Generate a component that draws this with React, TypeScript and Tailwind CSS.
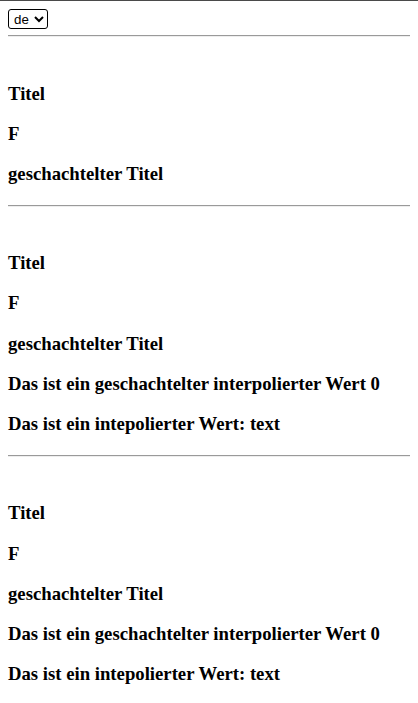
import React from "react";

const serif = "font-['Liberation_Serif','Times_New_Roman',serif]";

function Heading({ children }: { children: React.ReactNode }) {
  return <h3 className={`${serif} text-[18.72px] font-bold leading-[21.5px] h-[21.5px] text-black`}>{children}</h3>;
}

function Rule() {
  return <div className="h-[2px] border-t border-t-[#9a9a9a] border-b border-b-[#eeeeee]" />;
}

function Section({ items }: { items: string[] }) {
  return (
    <div className="flex flex-col gap-[18.72px] pt-[45.5px] pb-[20.25px]">
      {items.map((t, i) => (
        <Heading key={i}>{t}</Heading>
      ))}
    </div>
  );
}

export default function App() {
  const base = ["Titel", "F", "geschachtelter Titel"];
  const full = [
    ...base,
    "Das ist ein geschachtelter interpolierter Wert 0",
    "Das ist ein intepolierter Wert: text",
  ];
  return (
    <div className="min-h-[703px] bg-white border-t border-t-[#4a4a4a]">
      <div className="px-2">
        <div className="flex items-start pt-[8px] h-[34px]">
          <select
            defaultValue="de"
            className="h-[20px] w-[40px] border border-black rounded-[3px] bg-white text-black text-[13.33px] leading-[16px] font-['Liberation_Sans',Arial,sans-serif] pl-[1px]"
          >
            <option value="de">de</option>
            <option value="en">en</option>
          </select>
        </div>
        <Rule />
        <Section items={base} />
        <Rule />
        <Section items={full} />
        <Rule />
        <Section items={full} />
      </div>
    </div>
  );
}
